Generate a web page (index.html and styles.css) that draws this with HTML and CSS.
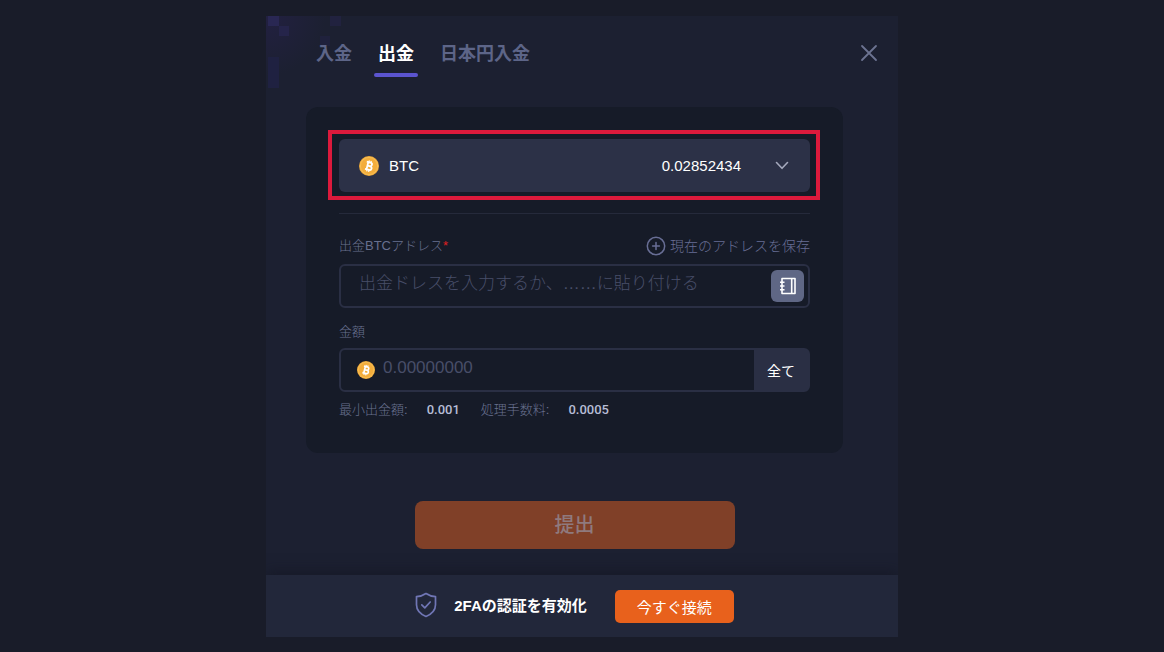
FILE: index.html
```html
<!DOCTYPE html>
<html lang="ja">
<head>
    <meta charset="UTF-8">
    <meta name="viewport" content="width=device-width, initial-scale=1.0">
    <title>出金</title>
    <link rel="stylesheet" href="styles.css">
</head>
<body>
    <svg class="symbols" aria-hidden="true">
        <symbol id="btc" viewBox="0 0 20 20">
            <circle cx="10" cy="10" r="10" fill="#f3ad3b"/>
            <circle cx="10" cy="10" r="8.6" fill="none" stroke="#f8c35c" stroke-width="0.8"/>
            <g fill="none" stroke="#fff" stroke-width="1.8" stroke-linejoin="round" transform="rotate(14 10 10)">
                <path d="M6.8 6.4h4a1.8 1.8 0 0 1 0 3.6H8.4M8.4 10h2.8a1.9 1.9 0 0 1 0 3.8H6.8M8.4 6.4v7.4"/>
                <path stroke-width="1.2" d="M9 4.4v2M11 4.4v2M9 13.8v2M11 13.8v2"/>
            </g>
        </symbol>
    </svg>

    <main class="modal">
        <div class="pixels" aria-hidden="true"></div>
        <header class="header">
            <nav class="tabs">
                <a href="#deposit" class="tab">入金</a>
                <a href="#withdraw" class="tab active">出金</a>
                <a href="#jpy" class="tab">日本円入金</a>
            </nav>
            <button type="button" class="close" aria-label="閉じる">
                <svg width="18" height="18" viewBox="0 0 18 18" fill="none" stroke="currentColor" stroke-width="1.8" stroke-linecap="round"><path d="M2 2l14 14M16 2L2 16"/></svg>
            </button>
        </header>

        <form class="form">
            <div class="card">
                <div class="highlight">
                    <div class="currency">
                        <svg width="20" height="20"><use href="#btc"/></svg>
                        <select class="currencySelect" aria-label="通貨">
                            <option>BTC</option>
                        </select>
                        <span class="balance">0.02852434</span>
                        <svg class="arrow" width="14" height="9" viewBox="0 0 14 9" fill="none" stroke="currentColor" stroke-width="1.6" stroke-linecap="round" stroke-linejoin="round"><path d="M1.5 1.5L7 7.3l5.5-5.8"/></svg>
                    </div>
                </div>

                <hr class="divider">

                <div class="labelRow">
                    <label for="address" class="label">出金BTCアドレス<span class="required">*</span></label>
                    <button type="button" class="saveButton">
                        <svg width="20" height="20" viewBox="0 0 20 20" fill="none" stroke="currentColor" stroke-width="1.5" stroke-linecap="round"><circle cx="10" cy="10" r="8.7"/><path d="M10 6.6v6.8M6.6 10h6.8"/></svg>
                        現在のアドレスを保存
                    </button>
                </div>
                <div class="field addressField">
                    <input type="text" id="address" class="input" placeholder="出金ドレスを入力するか、……に貼り付ける">
                    <button type="button" class="bookButton" aria-label="アドレス帳">
                        <svg width="18" height="18" viewBox="0 0 18 18" fill="none" stroke="currentColor" stroke-width="1.6" stroke-linejoin="round"><path d="M3 1.5h13v15H3zM12.7 1.5v15M1 5.2h4.5M1 9h4.5M1 12.8h4.5"/></svg>
                    </button>
                </div>

                <label for="amount" class="label amountLabel">金額</label>
                <div class="field amountField">
                    <svg width="18" height="18"><use href="#btc"/></svg>
                    <input type="text" id="amount" class="input" placeholder="0.00000000">
                    <button type="button" class="allButton">全て</button>
                </div>

                <p class="fees">
                    <span>最小出金額:</span><b>0.001</b>
                    <span class="fee">処理手数料:</span><b>0.0005</b>
                </p>
            </div>

            <button type="submit" class="submitButton" disabled>提出</button>
        </form>

        <footer class="footer">
            <svg width="22" height="26" viewBox="0 0 22 26" fill="none" stroke="#7076b5" stroke-width="1.7" stroke-linecap="round" stroke-linejoin="round"><path d="M11 1.5C8 3.6 5 4.4 1.5 4.6v8.2c0 5.7 4 9.4 9.5 11.7 5.5-2.3 9.5-6 9.5-11.7V4.6C17 4.4 14 3.6 11 1.5z"/><path d="M6.8 12.8l3 3 5.4-5.8"/></svg>
            <strong class="footerText">2FAの認証を有効化</strong>
            <button type="button" class="connectButton">今すぐ接続</button>
        </footer>
    </main>
</body>
</html>
```
FILE: styles.css
```css
* {
    box-sizing: border-box;
}

body {
    margin: 0;
    padding: 16px 0 15px;
    background-color: #191c29;
    color: #fff;
    font-family: "Liberation Sans", "Noto Sans CJK JP", sans-serif;
    font-size: 15px;
}

button, input, select {
    margin: 0;
    padding: 0;
    border: none;
    background: none;
    color: inherit;
    font-family: inherit;
    font-size: inherit;
}

button {
    cursor: pointer;
}

svg {
    display: block;
    flex: none;
}

.symbols {
    width: 0;
    height: 0;
    position: absolute;
}

.modal {
    position: relative;
    width: 100%;
    max-width: 632px;
    margin: 0 auto;
    overflow: hidden;
    background-color: #1c2031;
}

/* pixel pattern in the top left corner */
.pixels {
    position: absolute;
    top: 0;
    left: 0;
    width: 90px;
    height: 80px;
    background:
        linear-gradient(#292753, #292753) 2px 0 / 11px 10px no-repeat,
        linear-gradient(#25244a, #25244a) 13px 10px / 10px 10px no-repeat,
        linear-gradient(#21223f, #21223f) 64px 0 / 11px 10px no-repeat,
        linear-gradient(#1f213c, #1f213c) 54px 20px / 10px 10px no-repeat,
        linear-gradient(#1f2141, #1f2141) 2px 41px / 11px 31px no-repeat,
        radial-gradient(circle at 0 0, #222041, transparent 60px);
}

.header {
    position: relative;
    display: flex;
    justify-content: space-between;
    align-items: flex-start;
    padding: 25px 20px 30px 47px;
}

.tabs {
    display: flex;
    gap: 20px;
}

.tab {
    padding: 0 3px;
    color: #5d6588;
    font-size: 18px;
    font-weight: bold;
    line-height: 26px;
    text-decoration: none;
}

.tab::after {
    content: "";
    display: block;
    height: 4px;
    margin: 6px -4px 0;
    border-radius: 2px;
}

.tab.active {
    color: #fff;
}

.tab.active::after {
    background-color: #5b54cf;
}

.close {
    margin-top: 3px;
    color: #6c7391;
}

.form {
    padding: 0 55px 26px 40px;
}

.card {
    padding: 23px 33px 33px;
    border-radius: 12px;
    background-color: #161b28;
}

.highlight {
    margin: 0 -10px 0 -11px;
    padding: 5px 6px 4px 7px;
    border: 4px solid #dc1a3c;
}

.currency {
    display: flex;
    align-items: center;
    height: 53px;
    padding: 0 21px 0 20px;
    border-radius: 6px;
    background-color: #2c3147;
}

.currencySelect {
    flex: 1;
    min-width: 0;
    margin-left: 10px;
    appearance: none;
}

.currencySelect option {
    background-color: #2c3147;
}

.balance {
    margin-right: 34px;
}

.arrow {
    color: #a5a9bd;
}

.divider {
    margin: 13px 0 22px;
    border: none;
    border-top: 1px solid #252a3b;
}

.labelRow {
    display: flex;
    justify-content: space-between;
    align-items: center;
    margin-bottom: 8px;
}

.label {
    color: #68708f;
    font-size: 13px;
    font-weight: 300;
    line-height: 20px;
}

.required {
    color: #e02020;
}

.saveButton {
    display: flex;
    align-items: center;
    gap: 4px;
    color: #686e95;
    font-size: 14px;
    font-weight: 300;
    line-height: 20px;
}

.field {
    display: flex;
    align-items: center;
    height: 44px;
    border: 2px solid #2a2f44;
    border-radius: 6px;
}

.input {
    flex: 1;
    min-width: 0;
    height: 40px;
    padding-bottom: 4px;
    outline: none;
    font-size: 17px;
    font-weight: 300;
}

.input::placeholder {
    color: #484e68;
    opacity: 1;
}

.addressField {
    padding: 0 4px 0 18px;
}

.bookButton {
    display: flex;
    align-items: center;
    justify-content: center;
    width: 33px;
    height: 32px;
    border-radius: 6px;
    background-color: #5f6785;
}

.amountLabel {
    display: block;
    margin-top: 14px;
    margin-bottom: 6px;
}

.amountField {
    gap: 8px;
    padding-left: 16px;
}

.allButton {
    align-self: stretch;
    width: 54px;
    background-color: #2a2f44;
    font-size: 14px;
}

.fees {
    display: flex;
    margin: 8px 0 0;
    color: #68708f;
    font-size: 13px;
    font-weight: 300;
    line-height: 20px;
}

.fees b {
    margin-left: 19px;
    color: #b6bdd6;
    font-family: Roboto, "Liberation Sans", sans-serif;
    font-weight: 500;
}

.fees .fee {
    margin-left: 21px;
}

.submitButton {
    display: block;
    width: 100%;
    max-width: 320px;
    height: 48px;
    margin: 48px auto 0;
    padding-bottom: 3px;
    border-radius: 8px;
    background-color: #804028;
    color: #8f7a7e;
    font-size: 20px;
    font-weight: 500;
}

.footer {
    position: relative;
    display: flex;
    align-items: center;
    justify-content: center;
    padding: 15px 15px 14px 0;
    background-color: #22273a;
    box-shadow: 0 -4px 12px rgba(18, 20, 32, 0.5);
}

.footer svg {
    margin-bottom: 4px;
}

.footerText {
    margin: 0 28px 4px 17px;
}

.connectButton {
    width: 119px;
    height: 33px;
    border-radius: 5px;
    background-color: #e8611c;
}
```
